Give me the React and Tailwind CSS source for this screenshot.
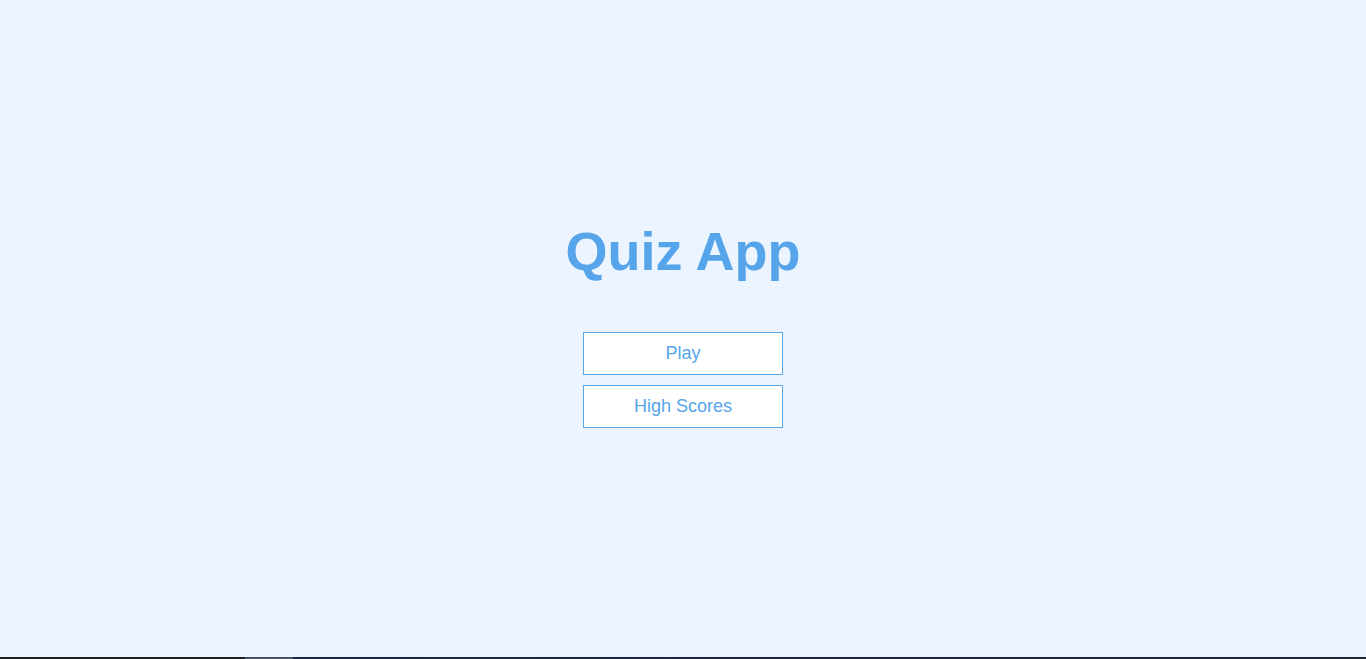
export default function App() {
  return (
    <div className="h-screen flex flex-col bg-[#ecf5ff] font-['Liberation_Sans',Arial,sans-serif]">
      <div className="flex-1 flex flex-col items-center justify-center">
        <h1 className="text-[54px] leading-[62px] font-bold text-[#56a5eb] mb-[50px]">Quiz App</h1>
        <a href="#" className="block w-[200px] p-[10px] mb-[10px] text-center text-[18px] leading-[21px] text-[#56a5eb] bg-white border border-[#56a5eb]">
          Play
        </a>
        <a href="#" className="block w-[200px] p-[10px] mb-[10px] text-center text-[18px] leading-[21px] text-[#56a5eb] bg-white border border-[#56a5eb]">
          High Scores
        </a>
      </div>
      <div className="h-[2px] flex">
        <div className="w-[245px] bg-[#1c1f24]"></div>
        <div className="w-[48px] bg-[#4a5266]"></div>
        <div className="flex-1 bg-gradient-to-r from-[#1b2444] to-[#1c2230]"></div>
      </div>
    </div>
  );
}
